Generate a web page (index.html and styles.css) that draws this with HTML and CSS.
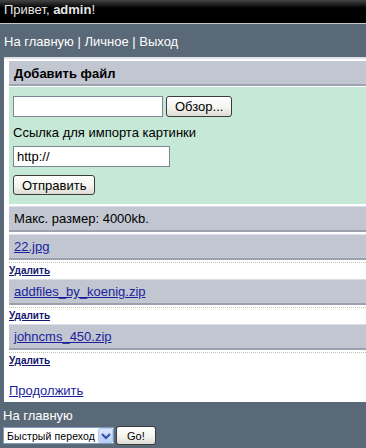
FILE: index.html
```html
<!DOCTYPE html>
<html lang="ru">
<head>
    <meta charset="UTF-8">
    <meta name="viewport" content="width=device-width, initial-scale=1.0">
    <title>Добавить файл</title>
    <link rel="stylesheet" href="styles.css">
</head>
<body>
    <div class="top">Привет, <b>admin</b>!</div>
    <div class="nav">
        <a href="#">На главную</a> | <a href="#">Личное</a> | <a href="#">Выход</a>
    </div>

    <div class="main">
        <div class="phdr"><b>Добавить файл</b></div>
        <form class="gmenu">
            <div class="file-row">
                <input type="text" class="file-path">
                <button type="button" class="btn">Обзор...</button>
            </div>
            <div class="label">Ссылка для импорта картинки</div>
            <input type="text" class="url" value="http://">
            <div>
                <button type="submit" class="btn">Отправить</button>
            </div>
        </form>

        <div class="menu">Макс. размер: 4000kb.</div>

        <div class="menu"><a href="#">22.jpg</a></div>
        <div class="sub"><a href="#">Удалить</a></div>

        <div class="menu"><a href="#">addfiles_by_koenig.zip</a></div>
        <div class="sub"><a href="#">Удалить</a></div>

        <div class="menu"><a href="#">johncms_450.zip</a></div>
        <div class="sub"><a href="#">Удалить</a></div>

        <div class="cont"><a href="#">Продолжить</a></div>
    </div>

    <div class="footer">
        <a href="#">На главную</a>
        <form class="jump">
            <span class="select-wrap">
                <select>
                    <option>Быстрый переход</option>
                    <option>Форум</option>
                    <option>Гостевая</option>
                </select>
                <span class="arrow">
                    <svg width="10" height="8" viewBox="0 0 10 8"><path d="M1 2 L5 6 L9 2" fill="none" stroke="#3050a8" stroke-width="2"/></svg>
                </span>
            </span>
            <button type="submit" class="btn go">Go!</button>
        </form>
    </div>
</body>
</html>
```

FILE: styles.css
```css
body {
    margin: 0;
    background: #5a6977;
    font-family: 'Liberation Sans', Arial, sans-serif;
    font-size: 13px;
    line-height: 15px;
    color: #000;
}

a {
    color: #1b1f9e;
}

.top {
    padding: 2px 4px 6px;
    background: linear-gradient(#454545, #000 8px);
    color: #e8e8e8;
    border-bottom: 1px solid #c6cace;
}

.nav {
    padding: 10px 4px 8px;
    color: #fff;
}

.nav a {
    color: #fff;
    text-decoration: none;
}

.main {
    margin-left: 4px;
    background: #fff;
    border-top: 2px solid #dfe2e7;
    padding: 2px 0 4px 5px;
}

.phdr {
    padding: 5px 5px 3px;
    background: #c1c6d1;
    border-bottom: 2px solid #9ea4ae;
}

.gmenu {
    margin: 1px 0 0;
    padding: 9px 4px 9px;
    background: #c6e8d6;
}

.file-row {
    display: flex;
    gap: 3px;
}

input[type="text"] {
    box-sizing: border-box;
    height: 21px;
    margin: 0;
    padding: 1px 3px;
    border: 1px solid #7b8894;
    background: #fff;
    font-family: 'Liberation Sans', Arial, sans-serif;
    font-size: 13px;
}

.file-path {
    width: 150px;
}

.label {
    margin-top: 8px;
}

.url {
    width: 157px;
    margin-top: 6px !important;
    display: block;
}

.gmenu .btn[type="submit"] {
    margin-top: 8px;
}

.btn {
    box-sizing: border-box;
    height: 20px;
    margin: 0;
    padding: 0 8px;
    border: 1px solid #3c3c3c;
    border-radius: 3px;
    background: linear-gradient(#ffffff, #f2f2ee 60%, #dcdcd4);
    font-family: 'Liberation Sans', Arial, sans-serif;
    font-size: 13px;
    color: #000;
}

.file-row .btn {
    height: 21px;
}

.menu {
    margin-top: 2px;
    padding: 4px 5px;
    background: #c1c6d1;
    border-top: 1px solid #dadee6;
    border-bottom: 2px solid #9ba1ad;
}

.sub {
    margin-top: 2px;
    padding: 2px 0;
    border-top: 1px dotted #c2c2b2;
    font-size: 10px;
    line-height: 12px;
    font-weight: bold;
}

.sub a {
    color: #14176e;
}

.sub + .menu {
    margin-top: 0;
}

.cont {
    padding-top: 14px;
}

.footer {
    padding: 6px 3px 0;
    color: #fff;
}

.footer a {
    color: #fff;
    text-decoration: none;
}

.jump {
    display: flex;
    align-items: center;
    gap: 2px;
    margin-top: 3px;
}

.select-wrap {
    position: relative;
    display: inline-block;
}

.select-wrap select {
    appearance: none;
    box-sizing: border-box;
    width: 111px;
    height: 17px;
    margin: 0;
    padding: 0 16px 0 3px;
    border: 1px solid #7f9db9;
    border-radius: 0;
    background: #fff;
    font-family: 'Liberation Sans', Arial, sans-serif;
    font-size: 10.5px;
    letter-spacing: 0.1px;
    color: #000;
}

.arrow {
    position: absolute;
    top: 1px;
    right: 1px;
    width: 15px;
    height: 15px;
    box-sizing: border-box;
    border: 1px solid #b4c8f4;
    border-radius: 2px;
    background: linear-gradient(#dce8fe, #b8cdf7);
    display: flex;
    align-items: center;
    justify-content: center;
    pointer-events: none;
}

.go {
    height: 19px;
    padding: 0 10px;
    font-size: 11px;
}
```
